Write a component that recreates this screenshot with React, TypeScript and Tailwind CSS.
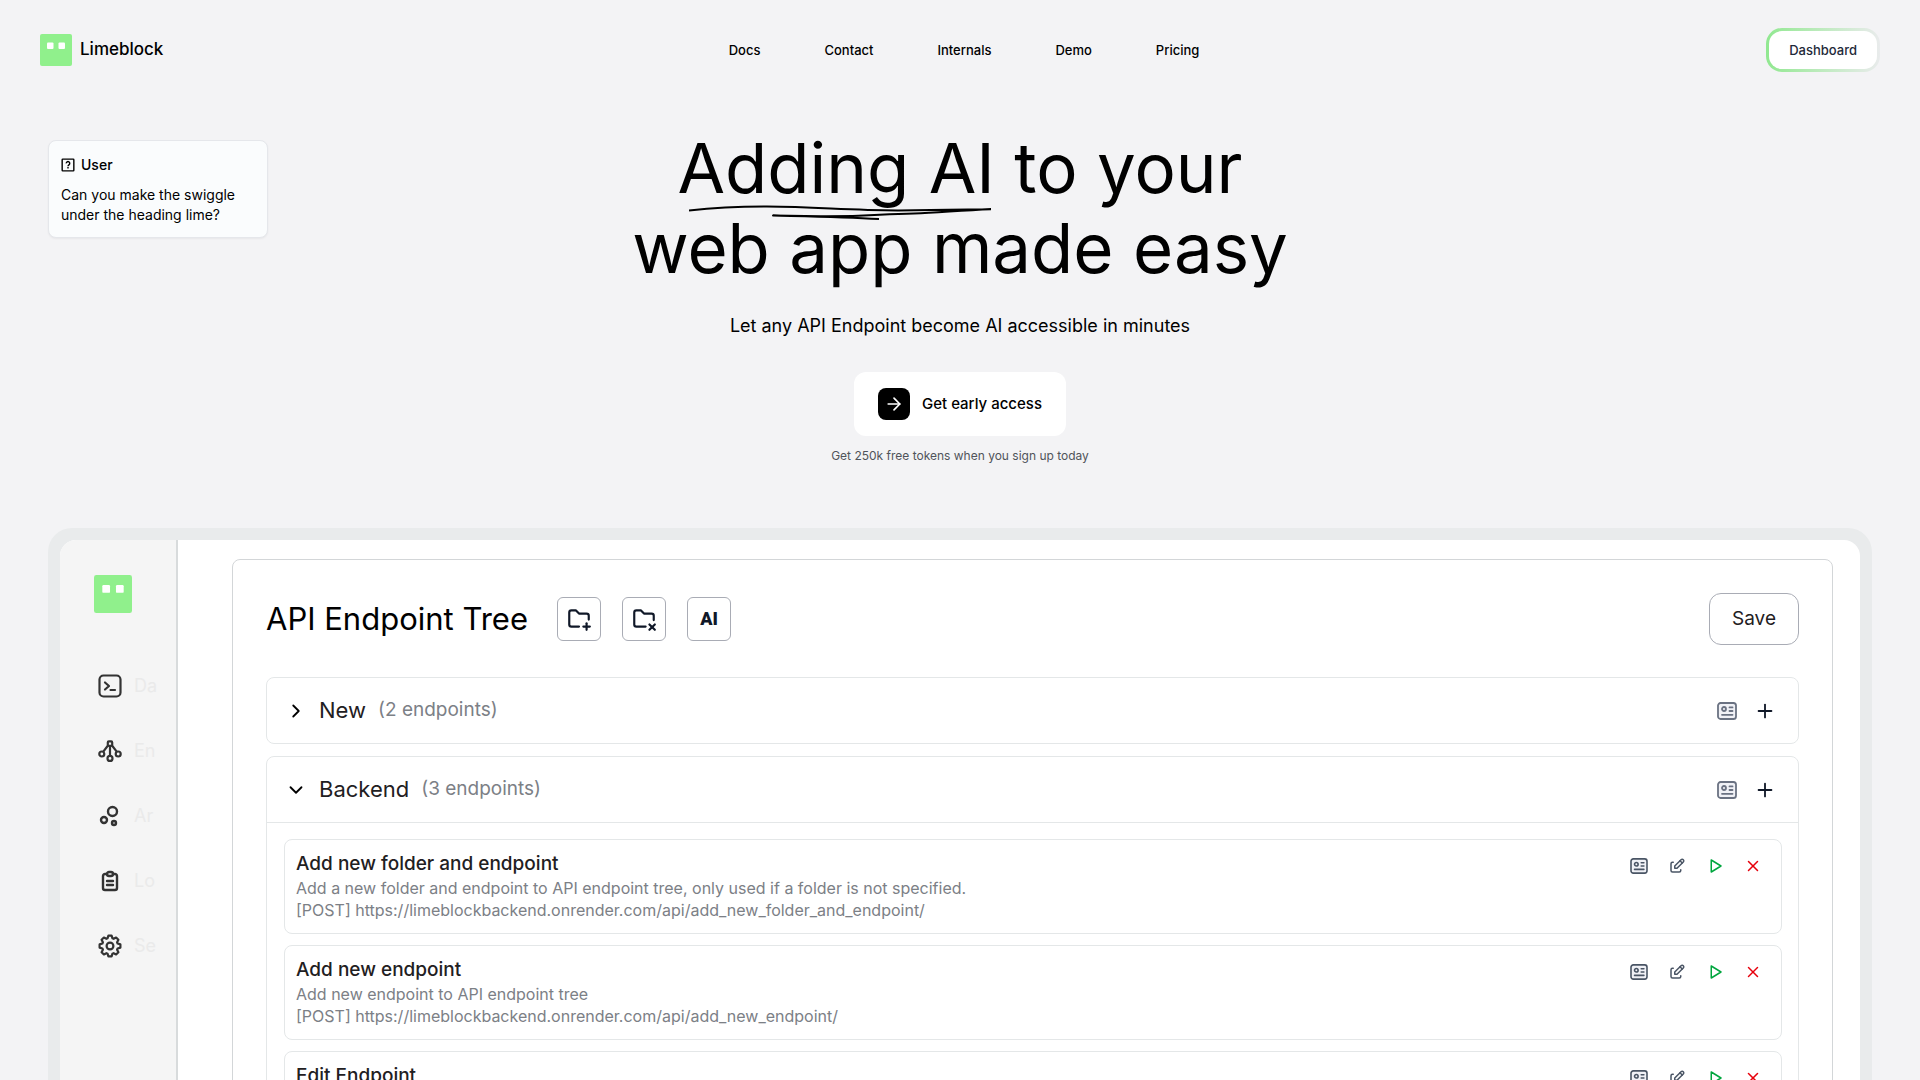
import React from 'react';
import { ArrowRight, ChevronDown, ChevronRight, Plus } from 'lucide-react';
import {
  TbChartBubble,
  TbClipboardText,
  TbEdit,
  TbFolderPlus,
  TbFolderX,
  TbPlayerPlay,
  TbX,
} from 'react-icons/tb';

const navLinks = ['Docs', 'Contact', 'Internals', 'Demo', 'Pricing'];

const endpoints = [
  {
    name: 'Add new folder and endpoint',
    description: 'Add a new folder and endpoint to API endpoint tree, only used if a folder is not specified.',
    url: '[POST] https://limeblockbackend.onrender.com/api/add_new_folder_and_endpoint/',
  },
  {
    name: 'Add new endpoint',
    description: 'Add new endpoint to API endpoint tree',
    url: '[POST] https://limeblockbackend.onrender.com/api/add_new_endpoint/',
  },
  {
    name: 'Edit Endpoint',
    description: '',
    url: '',
  },
];

const LogoMark: React.FC<{ className: string }> = ({ className }) => (
  <svg viewBox="0 0 32 32" className={className} aria-hidden="true">
    <rect width="32" height="32" rx="2" fill="#90f08c" />
    <rect x="7" y="8.5" width="6.5" height="6.5" rx="1" fill="#fff" />
    <rect x="18.5" y="8.5" width="6.5" height="6.5" rx="1" fill="#fff" />
  </svg>
);

const QuestionIcon: React.FC = () => (
  <svg viewBox="0 0 24 24" className="h-3.5 w-3.5" fill="none" stroke="currentColor" strokeWidth="2.4" aria-hidden="true">
    <rect x="2" y="2" width="20" height="20" rx="1" />
    <path d="M9 9.2a3 3 0 1 1 4.6 2.5c-1 .7-1.6 1.1-1.6 2.3" />
    <path d="M12 15.6v2.4" />
  </svg>
);

const TerminalIcon: React.FC = () => (
  <svg viewBox="0 0 24 24" className="h-6 w-6" fill="none" stroke="currentColor" strokeWidth="2.2" strokeLinecap="round" strokeLinejoin="round" aria-hidden="true">
    <rect x="1.5" y="1.5" width="21" height="21" rx="4" />
    <path d="m7 8.5 4 3.5-4 3.5M12.5 16H17" />
  </svg>
);

const NodesIcon: React.FC = () => (
  <svg viewBox="0 0 24 24" className="h-6 w-6" fill="none" stroke="currentColor" strokeWidth="2.2" aria-hidden="true">
    <rect x="9.8" y="2.4" width="4.4" height="4.4" rx="1" />
    <circle cx="3.8" cy="15" r="2.5" />
    <circle cx="20.2" cy="15" r="2.5" />
    <circle cx="12" cy="19.4" r="2.5" />
    <path d="M12 7v10M10 6.5 5.3 12.6M14 6.5l4.7 6.1" />
  </svg>
);

// eight rounded teeth around the hub
const GearIcon: React.FC = () => (
  <svg viewBox="0 0 24 24" className="h-6 w-6" fill="none" stroke="currentColor" strokeWidth="2.2" strokeLinejoin="round" aria-hidden="true">
    <path d="M10.4 1.6h3.2l.8 2.7 1.2.5 2.5-1.3 2.3 2.3-1.3 2.5.5 1.2 2.8.9v3.2l-2.8.9-.5 1.2 1.3 2.5-2.3 2.3-2.5-1.3-1.2.5-.8 2.7h-3.2l-.8-2.7-1.2-.5-2.5 1.3-2.3-2.3 1.3-2.5-.5-1.2-2.8-.9v-3.2l2.8-.9.5-1.2-1.3-2.5 2.3-2.3 2.5 1.3 1.2-.5Z" />
    <circle cx="12" cy="12" r="3.4" />
  </svg>
);

const CardIcon: React.FC<{ className: string }> = ({ className }) => (
  <svg viewBox="0 0 20 18" className={className} fill="none" stroke="currentColor" strokeWidth="1.8" strokeLinecap="round" aria-hidden="true">
    <rect x="1" y="1" width="18" height="16" rx="2.6" fill="#f0f1f6" />
    <circle cx="7" cy="7" r="2" />
    <path d="M12.5 5.4h3M12.5 9h3M5 12.8h10.5" />
  </svg>
);

const sidebarItems = [
  { label: 'Da', icon: <TerminalIcon /> },
  { label: 'En', icon: <NodesIcon /> },
  { label: 'Ar', icon: <TbChartBubble className="h-6 w-6" strokeWidth={2.4} /> },
  { label: 'Lo', icon: <TbClipboardText className="h-6 w-6" strokeWidth={2.4} /> },
  { label: 'Se', icon: <GearIcon /> },
];

const Header: React.FC = () => (
  <header className="grid grid-cols-[1fr_auto_1fr] items-center px-10 py-7">
    <a href="#" className="flex items-center gap-2 justify-self-start text-[17px] font-medium text-black">
      <LogoMark className="h-8 w-8" />
      Limeblock
    </a>
    <nav className="flex items-center gap-16 pl-2 text-[13px]/5 font-medium text-black">
      {navLinks.map((link) => (
        <a key={link} href="#">
          {link}
        </a>
      ))}
    </nav>
    <button
      type="button"
      className="justify-self-end rounded-2xl bg-linear-to-r from-[#90e890] to-[#e9ebec] p-[3px] text-[13px]/5 font-medium text-gray-800"
    >
      <span className="block rounded-[13px] bg-white px-5 py-[9px]">Dashboard</span>
    </button>
  </header>
);

const UserNote: React.FC = () => (
  <aside className="absolute top-10 left-12 w-[220px] rounded-lg border border-gray-200 bg-[#fafcfd] p-3 text-sm text-black shadow-xs">
    <div className="flex items-center gap-1.5 pt-0.5 font-medium">
      <QuestionIcon />
      User
    </div>
    <p className="pt-2.5">
      Can you make the swiggle
      <br />
      under the heading lime?
    </p>
  </aside>
);

const Hero: React.FC = () => (
  <section className="relative flex flex-col items-center pt-7 text-black">
    <UserNote />
    <h1 className="text-center text-[69px]/[80px] font-normal">
      <span className="relative inline-block">
        Adding AI
        <svg
          viewBox="0 0 302 16"
          className="absolute top-[76px] left-3 h-4 w-[302px]"
          fill="none"
          stroke="currentColor"
          strokeWidth="2"
          strokeLinejoin="round"
          aria-hidden="true"
        >
          <path d="M0 6.5C24 3.8 50 2.5 78 2.6C130 3 160 6.5 210 6.4C250 6.4 275 5.6 302 5.2C270 6.4 250 8.6 225 9.4C190 10 180 12.6 132 12.3L84 11.5C120 12.4 155 13 190 15" />
        </svg>
      </span>{' '}
      to your
      <br />
      web app made easy
    </h1>
    <p className="mt-6 text-lg">Let any API Endpoint become AI accessible in minutes</p>
    <button type="button" className="mt-8 flex items-center gap-3 rounded-xl bg-white px-6 py-4 text-[15px] font-medium">
      <span className="flex h-8 w-8 items-center justify-center rounded-lg bg-black text-white">
        <ArrowRight className="h-5 w-5" />
      </span>
      Get early access
    </button>
    <p className="mt-3 text-xs text-[#50545a]">Get 250k free tokens when you sign up today</p>
  </section>
);

const Sidebar: React.FC = () => (
  <aside className="w-[118px] shrink-0 border-r-2 border-[#d8dbdc] bg-[#f5f5f5] pt-[35px] pl-[34px]">
    <LogoMark className="h-[38px] w-[38px]" />
    <ul className="mt-[61px] flex flex-col gap-[41px] pl-1 text-[#333]">
      {sidebarItems.map((item) => (
        <li key={item.label} className="flex h-6 items-center">
          <span className="flex w-9 shrink-0 items-center">{item.icon}</span>
          <span className="text-lg text-[#eaeaea]">{item.label}</span>
        </li>
      ))}
    </ul>
  </aside>
);

const FolderHeader: React.FC<{ name: string; count: number; open?: boolean }> = ({ name, count, open }) => (
  <div className="flex h-[65px] items-center justify-between pr-[22px] pl-[18px]">
    <div className="flex items-center gap-3">
      {open ? <ChevronDown className="h-[22px] w-[22px]" /> : <ChevronRight className="h-[22px] w-[22px]" />}
      <h3 className="text-[22px] text-[#1f2022]">{name}</h3>
      <span className="text-[19px] text-[#7c8086]">({count} endpoints)</span>
    </div>
    <div className="flex items-center gap-[17px]">
      <button type="button" title="Description" className="text-gray-500">
        <CardIcon className="h-[18px] w-5" />
      </button>
      <button type="button" title="Add endpoint" className="text-gray-900">
        <Plus className="h-[22px] w-[22px]" />
      </button>
    </div>
  </div>
);

const EndpointCard: React.FC<{ name: string; description: string; url: string }> = ({ name, description, url }) => (
  <div className="flex h-[95px] items-start justify-between rounded-lg border border-[#e4e7e8] pt-[11px] pr-[19px] pl-[11px]">
    <div className="text-base/[22px] text-[#7c8086]">
      <h4 className="text-[19px]/[26px] font-medium text-[#1f2022]">{name}</h4>
      <p>{description}</p>
      <p>{url}</p>
    </div>
    <div className="flex items-center gap-5 pt-[6px] text-gray-600">
      <button type="button" title="Description">
        <CardIcon className="h-4 w-[18px]" />
      </button>
      <button type="button" title="Edit">
        <TbEdit className="h-[18px] w-[18px]" />
      </button>
      <button type="button" title="Run" className="text-green-600">
        <TbPlayerPlay className="h-[18px] w-[18px]" />
      </button>
      <button type="button" title="Delete" className="text-red-600">
        <TbX className="h-[18px] w-[18px]" />
      </button>
    </div>
  </div>
);

const toolButton = 'flex h-11 w-11 items-center justify-center rounded-md border border-[#a9acb5]';

const Preview: React.FC = () => (
  <section className="mx-12 mt-16 rounded-3xl bg-[#e9ebec] p-3">
    <div className="flex overflow-hidden rounded-2xl bg-white">
      <Sidebar />
      <div className="grow pt-[19px] pr-[27px] pb-5 pl-[54px]">
        <div className="rounded-lg border border-[#d3d6d8] p-[33px]">
          <div className="flex items-center justify-between">
            <div className="flex items-center gap-[21px] text-gray-900">
              <h2 className="mr-2 text-[31px]/[48px] text-black">API Endpoint Tree</h2>
              <button type="button" title="Add folder" className={toolButton}>
                <TbFolderPlus className="h-[26px] w-[26px]" />
              </button>
              <button type="button" title="Delete folder" className={toolButton}>
                <TbFolderX className="h-[26px] w-[26px]" />
              </button>
              <button type="button" className={`${toolButton} text-lg`}>
                <span className="font-[Roboto,sans-serif] font-black">AI</span>
              </button>
            </div>
            <button type="button" className="rounded-xl border border-[#a9acb5] px-[22px] py-[11px] text-[19px]/7 text-[#1f2022]">
              Save
            </button>
          </div>
          <div className="mt-8 rounded-lg border border-[#e4e7e8]">
            <FolderHeader name="New" count={2} />
          </div>
          <div className="mt-3 rounded-lg border border-[#e4e7e8]">
            <FolderHeader name="Backend" count={3} open />
            <div className="flex flex-col gap-[11px] border-t border-[#e4e7e8] py-4 pr-4 pl-[17px]">
              {endpoints.map((endpoint) => (
                <EndpointCard key={endpoint.name} {...endpoint} />
              ))}
            </div>
          </div>
        </div>
      </div>
    </div>
  </section>
);

export default function App() {
  return (
    <main className="h-screen overflow-hidden bg-[#f3f3f5] font-[Inter,sans-serif]">
      <Header />
      <Hero />
      <Preview />
    </main>
  );
}
